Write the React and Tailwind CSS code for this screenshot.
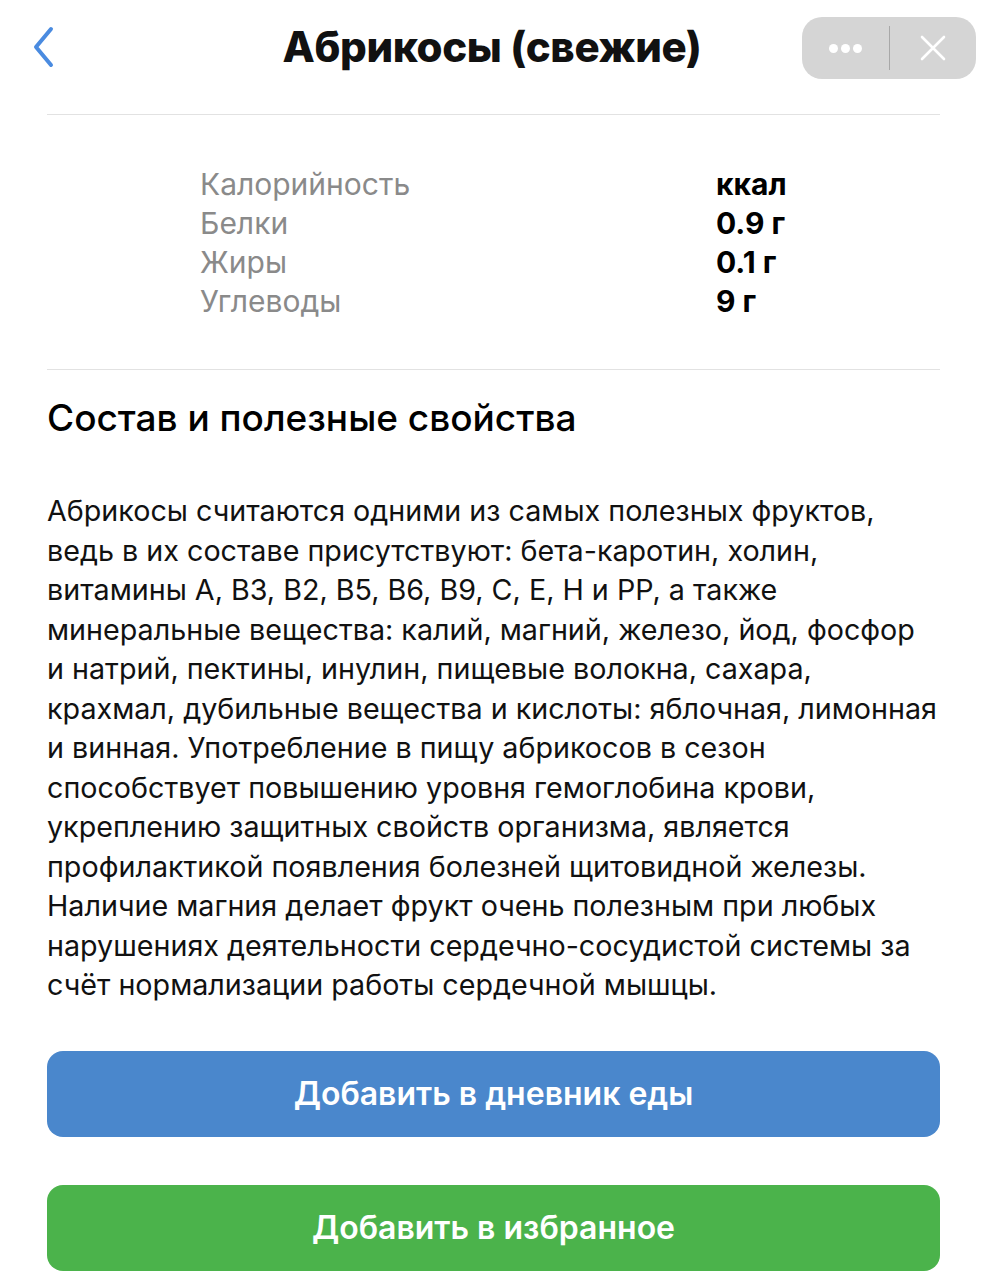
import React from "react";

const rows = [
  { label: "Калорийность", value: "ккал" },
  { label: "Белки", value: "0.9 г" },
  { label: "Жиры", value: "0.1 г" },
  { label: "Углеводы", value: "9 г" },
];

// wraps follow the original layout
const lines = [
  "Абрикосы считаются одними из самых полезных фруктов,",
  "ведь в их составе присутствуют: бета-каротин, холин,",
  "витамины A, B3, B2, B5, B6, B9, C, E, H и PP, а также",
  "минеральные вещества: калий, магний, железо, йод, фосфор",
  "и натрий, пектины, инулин, пищевые волокна, сахара,",
  "крахмал, дубильные вещества и кислоты: яблочная, лимонная",
  "и винная. Употребление в пищу абрикосов в сезон",
  "способствует повышению уровня гемоглобина крови,",
  "укреплению защитных свойств организма, является",
  "профилактикой появления болезней щитовидной железы.",
  "Наличие магния делает фрукт очень полезным при любых",
  "нарушениях деятельности сердечно-сосудистой системы за",
  "счёт нормализации работы сердечной мышцы.",
];

export default function App() {
  return (
    <div
      className="w-[984px] h-[1280px] overflow-hidden bg-white text-[#111]"
      style={{ fontFamily: 'Inter, "Liberation Sans", Arial, sans-serif' }}
    >
      {/* Header */}
      <div className="relative h-[96px] flex items-center justify-center">
        <button className="absolute left-[28px] top-[25px] w-[30px] h-[44px] flex items-center justify-center">
          <svg width="26" height="42" viewBox="0 0 26 42" fill="none">
            <path d="M21 3 L6 21 L21 39" stroke="#4a8be0" strokeWidth="4" strokeLinecap="round" strokeLinejoin="round" />
          </svg>
        </button>
        <h1 className="text-[42px] font-extrabold tracking-[-0.4px] leading-none mt-[-2px]">Абрикосы (свежие)</h1>
        <div className="absolute right-[8px] top-[17px] w-[174px] h-[62px] rounded-[20px] bg-[#d5d5d5] flex items-center">
          <div className="flex-1 flex items-center justify-center gap-[3px]">
            <span className="w-[9px] h-[9px] rounded-full bg-white" />
            <span className="w-[9px] h-[9px] rounded-full bg-white" />
            <span className="w-[9px] h-[9px] rounded-full bg-white" />
          </div>
          <div className="w-px h-[44px] bg-[#a8a8a8]" />
          <div className="flex-1 flex items-center justify-center">
            <svg width="26" height="26" viewBox="0 0 26 26">
              <path d="M2 2 L24 24 M24 2 L2 24" stroke="white" strokeWidth="2.6" strokeLinecap="round" />
            </svg>
          </div>
        </div>
      </div>

      <div className="pl-[47px] pr-[44px]">
        <div className="mt-[18px] h-px bg-[#e2e2e2]" />

        {/* Nutrition */}
        <div className="pl-[153px] pt-[50px] pb-[48px] text-[30px] leading-[39px]">
          {rows.map((r) => (
            <div key={r.label} className="flex">
              <span className="w-[516px] text-[#8a8a8a]">{r.label}</span>
              <span className="font-bold text-black">{r.value}</span>
            </div>
          ))}
        </div>

        <div className="h-px bg-[#e2e2e2]" />

        <h2 className="mt-[26px] text-[37px] font-medium leading-[44px] text-black">Состав и полезные свойства</h2>

        <p className="mt-[51px] text-[28.7px] leading-[39.5px] text-[#111]">
          {lines.map((l, i) => (
            <span key={i} className="block whitespace-nowrap">{l}</span>
          ))}
        </p>

        <button className="mt-[46px] w-full h-[86px] rounded-[16px] bg-[#4a87cc] text-white text-[32px] font-semibold">
          Добавить в дневник еды
        </button>
        <button className="mt-[48px] w-full h-[86px] rounded-[16px] bg-[#4bb34b] text-white text-[32px] font-semibold">
          Добавить в избранное
        </button>
      </div>
    </div>
  );
}
